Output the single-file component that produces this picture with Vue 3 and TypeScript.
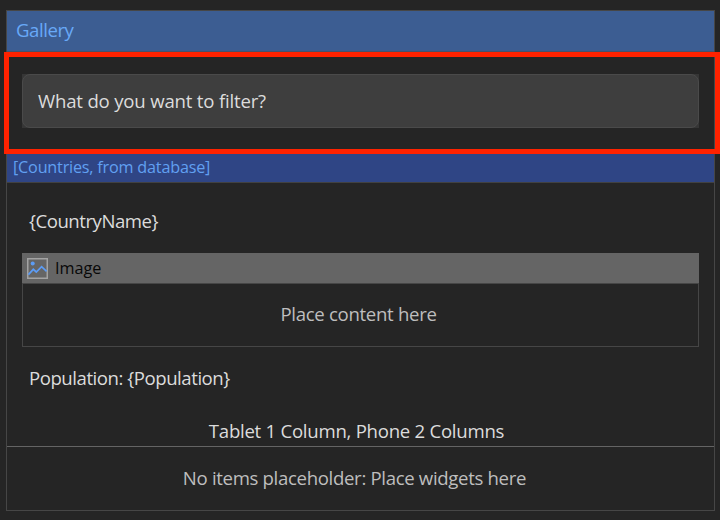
<script setup lang="ts">
const filterPrompt = 'What do you want to filter?'
const source = '[Countries, from database]'
const nameField = '{CountryName}'
const populationField = 'Population: {Population}'
</script>

<template>
  <main class="canvas">
    <section class="gallery">
      <header class="title"><span class="t-title">Gallery</span></header>
      <div class="filter">
        <div class="filter-slot">
          <div class="filter-box"><span class="t-filter">{{ filterPrompt }}</span></div>
        </div>
        <div class="highlight"></div>
      </div>
      <div class="source"><span class="t-source">{{ source }}</span></div>
      <div class="content">
        <div class="line name"><span class="t-name">{{ nameField }}</span></div>
        <div class="image">
          <div class="image-head">
            <svg class="icon" width="21" height="21" viewBox="0 0 21 21" fill="none">
              <rect x="0.75" y="0.75" width="19.5" height="19.5" stroke="#a3a3a3" stroke-width="1.5" />
              <circle cx="5.7" cy="5.5" r="2" fill="#5c9cf5" />
              <path d="M1.4 16.6 L6.3 11.3 L9.3 14 L14.6 8.6 L19.6 13.4" stroke="#5c9cf5" stroke-width="1.7" />
            </svg>
            <span class="t-image">Image</span>
          </div>
          <div class="image-body"><span class="t-place">Place content here</span></div>
        </div>
        <div class="line population"><span class="t-pop">{{ populationField }}</span></div>
        <div class="line columns"><span class="t-cols">Tablet 1 Column, Phone 2 Columns</span></div>
      </div>
      <footer class="empty"><span class="t-empty">No items placeholder: Place widgets here</span></footer>
    </section>
  </main>
</template>

<style>
body {
  margin: 0;
  background: #252525;
}
</style>

<style scoped>
.canvas {
  box-sizing: border-box;
  width: 720px;
  height: 520px;
  padding: 10px 5px 9px 6px;
  overflow: hidden;
  background: #252525;
  color: #dcdcdc;
  font-family: "Open Sans", "Noto Sans", sans-serif;
  font-size: 18.6px;
  line-height: 26px;
  white-space: nowrap;
}
.gallery {
  box-sizing: border-box;
  display: flex;
  flex-direction: column;
  height: 501px;
  border: 1px solid #464646;
}
.title {
  box-sizing: border-box;
  height: 41px;
  padding: 6px 9px 0;
  border-bottom: 1px solid #46536a;
  background: #3c5d92;
  color: #68a9f8;
}
.t-title {
  letter-spacing: -0.45px;
}
.filter {
  position: relative;
  box-sizing: border-box;
  height: 101px;
  padding: 22px 15px 24px;
}
.filter-slot {
  height: 54px;
  background: #363636;
}
.filter-box {
  box-sizing: border-box;
  height: 54px;
  padding: 13px 15px 0;
  border: 1px solid #4a4a4a;
  border-radius: 8px;
  background: #3e3e3e;
}
.t-filter {
  letter-spacing: -0.19px;
}
.highlight {
  position: absolute;
  box-sizing: border-box;
  left: -3px;
  top: 0;
  width: 716px;
  height: 102px;
  border: 5px solid #ff2200;
}
.source {
  box-sizing: border-box;
  height: 30px;
  padding: 1px 6px 0;
  border-bottom: 1px solid #414141;
  background: #2f4585;
  color: #61a0f2;
  font-size: 16.2px;
}
.t-source {
  letter-spacing: -0.2px;
}
.content {
  box-sizing: border-box;
  height: 264px;
  border-bottom: 1px solid #646464;
}
.name {
  padding: 25px 21px 19px 22px;
}
.t-name {
  letter-spacing: -0.48px;
}
.image {
  box-sizing: border-box;
  height: 94px;
  margin: 0 15px;
  border: 1px solid #464646;
  border-top: 0;
}
.image-head {
  box-sizing: border-box;
  display: flex;
  align-items: center;
  gap: 7px;
  height: 31px;
  margin: 0 -1px;
  padding-left: 5px;
  border-bottom: 1px solid #464646;
  background: #656565;
  color: #080808;
  font-size: 16.2px;
}
.image-body {
  padding: 17px 4px 0 0;
  text-align: center;
  color: #bebebe;
}
.t-place {
  letter-spacing: -0.31px;
}
.population {
  padding: 18px 22px 0;
}
.t-pop {
  letter-spacing: -0.46px;
}
.columns {
  padding: 27px 8px 0 0;
  text-align: center;
}
.t-cols {
  letter-spacing: -0.26px;
}
.empty {
  padding: 18px 12px 0 0;
  text-align: center;
  color: #bebebe;
}
.t-empty {
  letter-spacing: -0.33px;
}
</style>
